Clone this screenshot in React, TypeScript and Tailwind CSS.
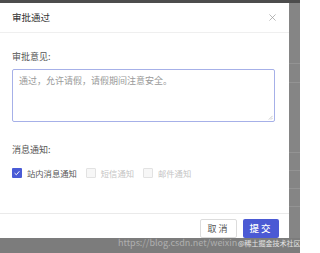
import React from 'react';

const options = [
  { label: '站内消息通知', checked: true, disabled: false },
  { label: '短信通知', checked: false, disabled: true },
  { label: '邮件通知', checked: false, disabled: true },
];

const rowLines = [60, 79, 149, 167, 185, 203];

const CheckBox = ({ checked, disabled }: { checked: boolean; disabled: boolean }) =>
  checked ? (
    <span className="flex h-[10px] w-[10px] items-center justify-center rounded-[1px] bg-[#4a5bd6]">
      <svg viewBox="0 0 10 10" className="h-[8px] w-[8px]">
        <path d="M2 5.2 L4.2 7.2 L8 2.8" fill="none" stroke="#fff" strokeWidth="1.2" />
      </svg>
    </span>
  ) : (
    <span
      className={
        'h-[10px] w-[10px] rounded-[1px] border ' +
        (disabled ? 'border-[#e2e2e2] bg-[#f7f7f7]' : 'border-[#ccc] bg-white')
      }
    />
  );

export default function App() {
  return (
    <div
      className="relative flex h-[253px] w-[300px] flex-col overflow-hidden bg-[#7c7c7c]"
      style={{ fontFamily: '"Noto Sans CJK SC", "Noto Sans", sans-serif' }}
    >
      <div className="h-[3px] bg-[#4d4d4d]" />
      <div className="flex">
        {/* dialog */}
        <div className="flex h-[235px] w-[289px] flex-col bg-white">
          <div className="flex h-[30px] items-center justify-between border-b border-[#efefef] pl-3 pr-[13px]">
            <span className="text-[9.5px] text-[#333]">审批通过</span>
            <svg viewBox="0 0 8 8" className="h-[7px] w-[7px]">
              <path d="M0.5 0.5 L7.5 7.5 M7.5 0.5 L0.5 7.5" stroke="#999" strokeWidth="0.8" />
            </svg>
          </div>

          <div className="flex flex-1 flex-col px-3 pt-[18px]">
            <div className="text-[9px] leading-[12px] text-[#555]">审批意见:</div>
            <div className="relative mt-[6px] h-[53px] w-[263px] rounded-[2px] border border-[#a6b0e8] px-[6px] pt-[5px] text-[9px] leading-[12px] text-[#9a9a9a]">
              通过，允许请假，请假期间注意安全。
              <svg viewBox="0 0 6 6" className="absolute bottom-[1px] right-[1px] h-[5px] w-[5px]">
                <path d="M5.5 1 L1 5.5 M5.5 3.5 L3.5 5.5" stroke="#999" strokeWidth="0.6" />
              </svg>
            </div>

            <div className="mt-[22px] text-[9px] leading-[12px] text-[#555]">消息通知:</div>
            <div className="mt-[11px] flex items-center gap-[9px]">
              {options.map((o) => (
                <label key={o.label} className="flex items-center gap-[5px]">
                  <CheckBox checked={o.checked} disabled={o.disabled} />
                  <span
                    className={
                      'text-[8.3px] leading-[12px] ' + (o.disabled ? 'text-[#c4c4c4]' : 'text-[#555]')
                    }
                  >
                    {o.label}
                  </span>
                </label>
              ))}
            </div>
          </div>

          <div className="flex h-[25px] items-end justify-end gap-[6px] border-t border-[#eaeaea] pr-[10px]">
            <button className="flex h-[19px] w-[37px] items-center justify-center rounded-[2px] border border-[#dcdcdc] bg-white text-[9px] tracking-[2px] text-[#555]">
              取消
            </button>
            <button className="flex h-[19px] w-[36px] items-center justify-center rounded-[2px] bg-[#4b5ad4] text-[9.5px] font-medium tracking-[2px] text-white">
              提交
            </button>
          </div>
        </div>

        {/* page behind the overlay */}
        <div className="relative flex-1 bg-[#858585]">
          {rowLines.map((y) => (
            <div key={y} className="absolute left-0 right-0 h-px bg-[#939393]" style={{ top: y }} />
          ))}
        </div>
      </div>

      <div className="absolute left-[118px] top-[238px] text-[9px] leading-[9px] text-white/40 whitespace-nowrap">
        https://blog.csdn.net/weixin
      </div>
      <div className="absolute left-[238px] top-[239px] text-[7px] leading-[8px] text-white/80 whitespace-nowrap">
        @稀土掘金技术社区
      </div>
    </div>
  );
}
